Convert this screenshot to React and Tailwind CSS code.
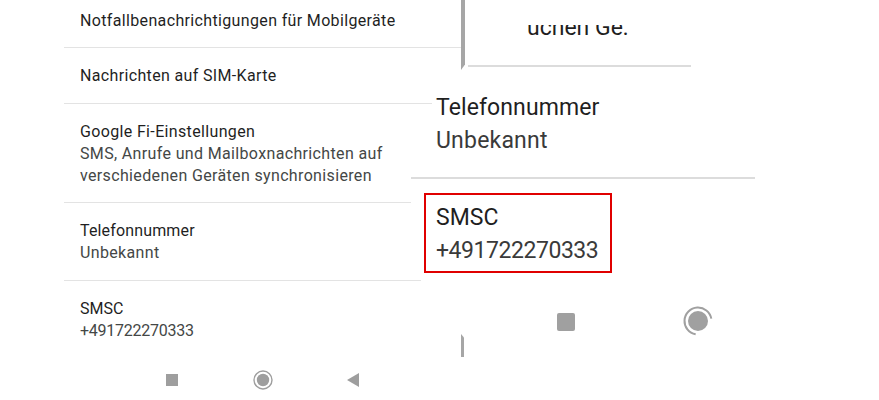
export default function App() {
  const title = "text-[16px] leading-[22px] text-[#1f1f1f] tracking-[0.35px]";
  const sub = "text-[16px] leading-[22px] text-[#444746] tracking-[0.35px]";
  const num = "text-[16px] leading-[22px] text-[#444746] tracking-[-0.25px]";
  return (
    <div className="relative w-[879px] h-[400px] bg-white overflow-hidden font-['Roboto',sans-serif]">
      {/* Left phone screen */}
      <div className="flex flex-col w-[411px]">
        <div className="ml-[64px] flex flex-col">
          <div className="pt-[10px] pb-[15px] pl-4">
            <div className={title}>Notfallbenachrichtigungen für Mobilgeräte</div>
          </div>
          <div className="h-px w-[397px] bg-[#e3e3e3]" />
          <div className="pt-[17px] pb-[16px] pl-4">
            <div className={title}>Nachrichten auf SIM-Karte</div>
          </div>
          <div className="h-px w-[368px] bg-[#e3e3e3]" />
          <div className="pt-[17px] pb-[15px] pl-4">
            <div className={title}>Google Fi-Einstellungen</div>
            <div className={sub}>SMS, Anrufe und Mailboxnachrichten auf</div>
            <div className={sub}>verschiedenen Geräten synchronisieren</div>
          </div>
          <div className="h-px w-[347px] bg-[#e3e3e3]" />
          <div className="pt-[17px] pb-[16px] pl-4">
            <div className="text-[16px] leading-[22px] text-[#1f1f1f] tracking-[0.15px]">Telefonnummer</div>
            <div className={sub}>Unbekannt</div>
          </div>
          <div className="h-px w-[357px] bg-[#e3e3e3]" />
          <div className="pt-[17px] pb-[16px] pl-4">
            <div className="text-[16px] leading-[22px] text-[#1f1f1f]">SMSC</div>
            <div className={num}>+491722270333</div>
          </div>
        </div>
        {/* nav bar */}
        <div className="h-[44px] flex items-center">
          <div className="ml-[166px] w-[12px] h-[12px] bg-[#9e9e9e]" />
          <svg className="ml-[75px]" width="20" height="20" viewBox="0 0 20 20">
            <circle cx="10" cy="10" r="9" fill="none" stroke="#9e9e9e" strokeWidth="1.4" />
            <circle cx="10" cy="10" r="6.2" fill="#9e9e9e" />
          </svg>
          <svg className="ml-[74px]" width="12" height="14" viewBox="0 0 12 14">
            <polygon points="12,0 12,14 0,7" fill="#9e9e9e" />
          </svg>
        </div>
      </div>

      {/* Magnifier overlay */}
      <div className="absolute left-[411px] top-0 flex flex-col w-[468px]">
        <div className="flex h-[70px]">
          <div className="ml-[50px] w-[4px] h-[70px] bg-[#a6a6a6] [clip-path:polygon(0_0,100%_0,100%_92%,0_100%)]" />
          <div className="flex flex-col">
            <div className="mt-[25px] ml-[62px] h-[10px] overflow-hidden">
              <div className="-mt-[11px] text-[23px] leading-[27px] text-[#1f1f1f] whitespace-nowrap">uchen Ge:</div>
            </div>
            <div className="mt-[30px] ml-[3px] w-[223px] h-[2px] bg-[#dcdcdc]" />
          </div>
        </div>
        <div className="mt-[21px] ml-[25px] flex flex-col">
          <div className="text-[23px] leading-[33px] text-[#1f1f1f] tracking-[0.1px]">Telefonnummer</div>
          <div className="text-[23px] leading-[33px] text-[#3a3a3a] tracking-[0.2px]">Unbekannt</div>
        </div>
        <div className="mt-[20px] w-[344px] h-[2px] bg-[#dcdcdc]" />
        <div className="mt-[14px] ml-[13px] w-[188px] h-[80px] border-2 border-[#e00000] pl-[10px] pt-[6px]">
          <div className="text-[23px] leading-[33px] text-[#1f1f1f]">SMSC</div>
          <div className="text-[23px] leading-[33px] text-[#3a3a3a] tracking-[-0.45px]">+491722270333</div>
        </div>
        <div className="mt-[37px] h-[24px] flex items-center">
          <div className="ml-[146px] w-[18px] h-[18px] rounded-[2px] bg-[#a0a0a0]" />
          <svg className="ml-[108px] -mt-[2px]" width="30" height="30" viewBox="0 0 30 30">
            <path d="M12.66 28.3 A13.5 13.5 0 1 1 28.3 12.66" fill="none" stroke="#a0a0a0" strokeWidth="2" />
            <circle cx="15" cy="15" r="10" fill="#a0a0a0" />
          </svg>
        </div>
        <div className="ml-[50px] w-[3px] h-[23px] bg-[#a6a6a6] [clip-path:polygon(0_0,100%_15%,100%_100%,0_100%)]" />
      </div>
    </div>
  );
}
